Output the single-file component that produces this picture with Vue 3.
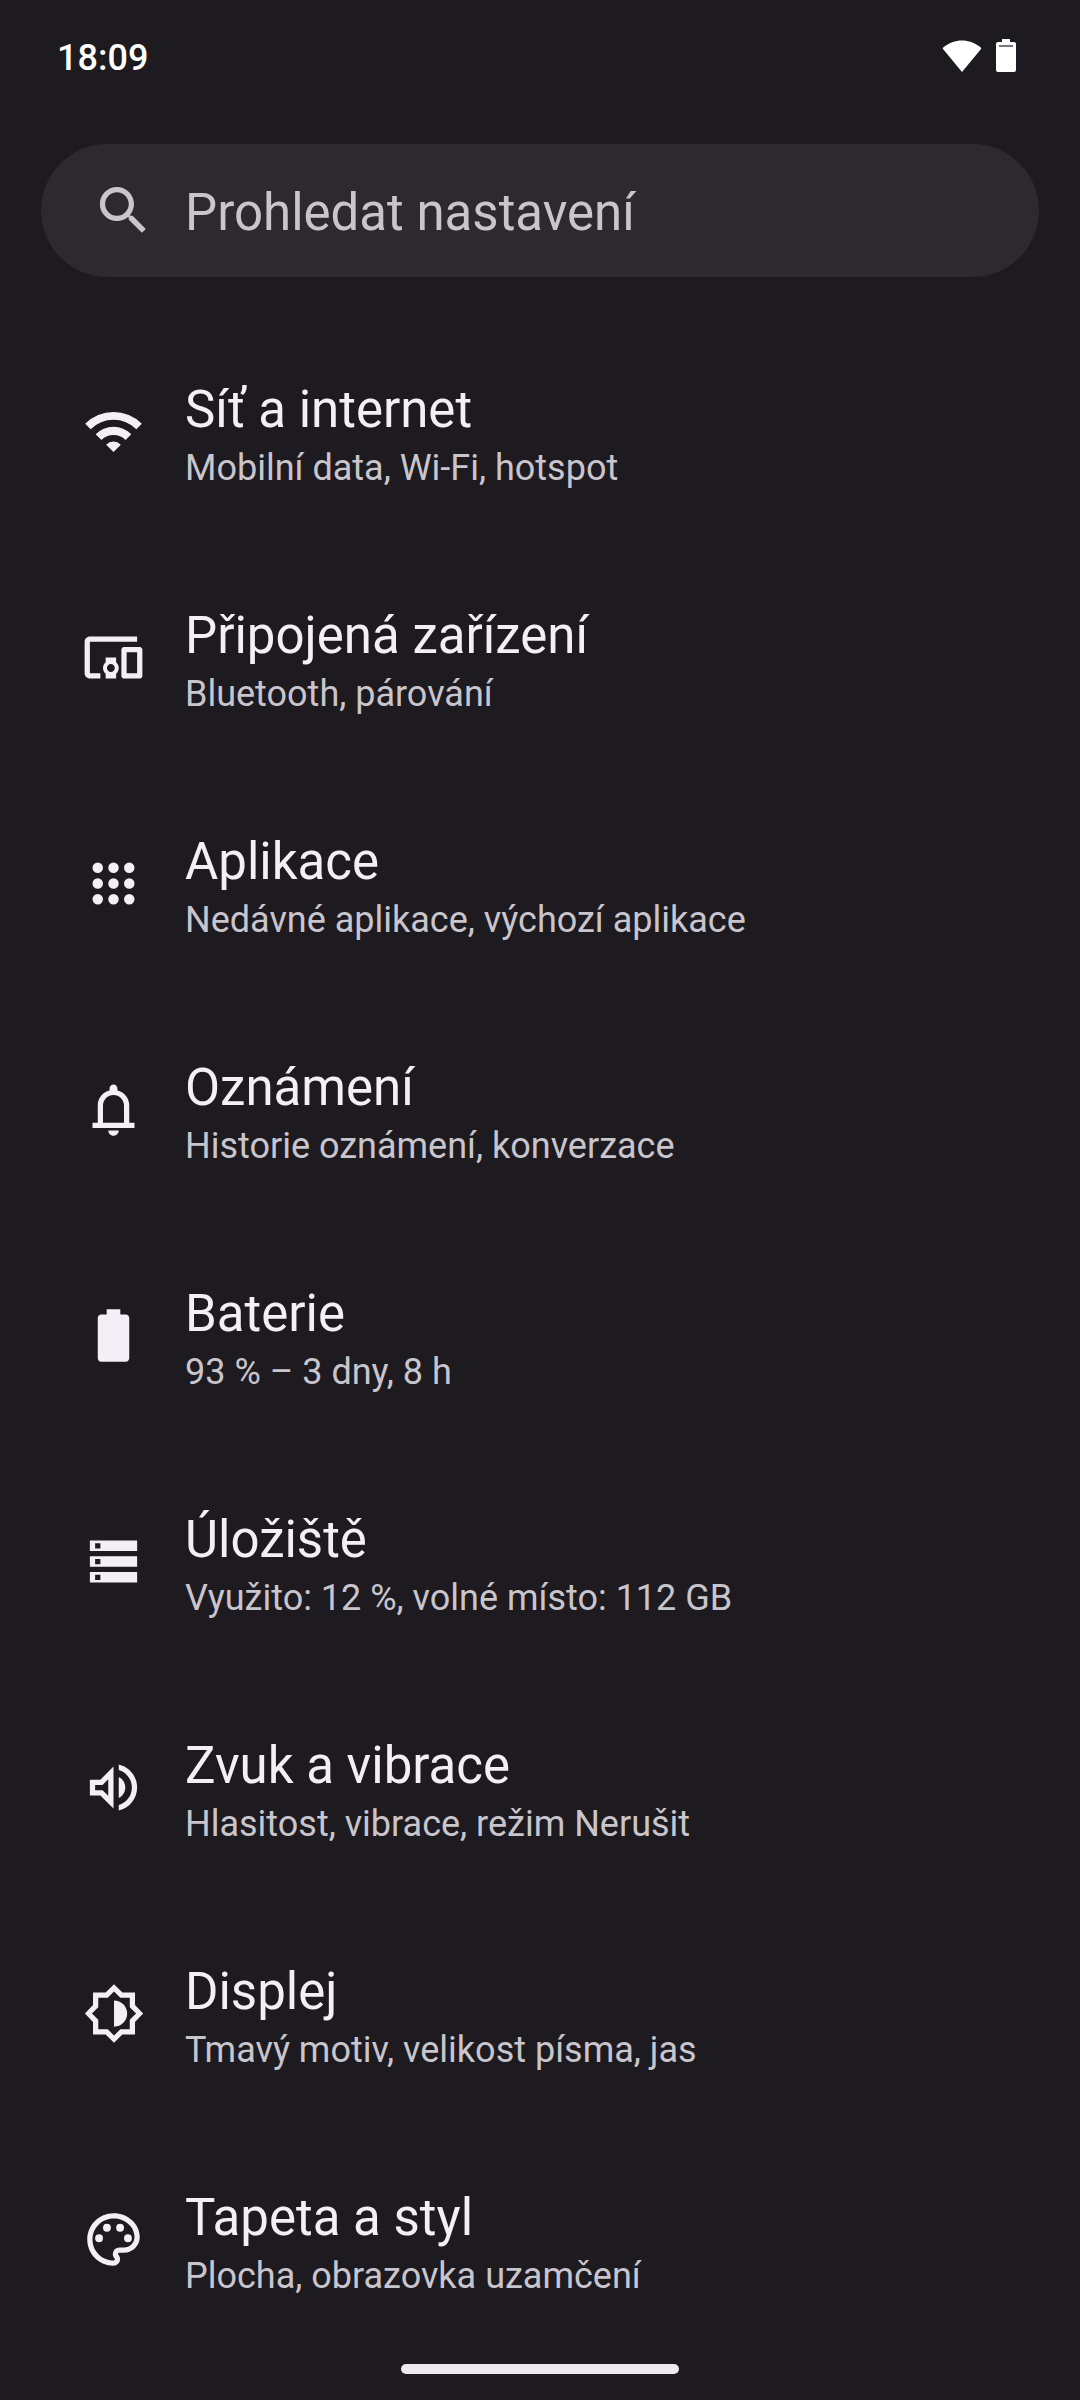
<template>
  <div class="settings">
    <header class="status-bar">
      <time class="clock">18:09</time>
      <div class="status-icons">
        <svg class="status-wifi" viewBox="0 0 40 34" aria-hidden="true">
          <path d="M20 33 L1 10 Q0.400 9 1.500 8.300 C12 -0.900 28 -0.900 38.500 8.300 Q39.600 9 39 10 Z" />
        </svg>
        <svg class="status-battery" viewBox="0 0 20 34" aria-hidden="true">
          <path d="M6 0h8v3h4q2 0 2 2v26q0 2-2 2H2q-2 0-2-2V5q0-2 2-2h4z" />
          <path class="battery-level" d="M3 6h14v2H3z" />
        </svg>
      </div>
    </header>

    <label class="search">
      <svg class="icon" viewBox="0 0 24 24" aria-hidden="true">
        <path :d="searchIcon" />
      </svg>
      <input v-model="query" type="text" placeholder="Prohledat nastavení" aria-label="Prohledat nastavení">
    </label>

    <nav>
      <ul class="menu">
        <li v-for="item in items" :key="item.id">
          <a :href="'#' + item.id" class="row">
            <svg class="icon" viewBox="0 0 24 24" aria-hidden="true">
              <path :d="item.icon" fill-rule="evenodd" />
            </svg>
            <span class="texts">
              <span class="title">{{ item.title }}</span>
              <span class="summary">{{ item.summary }}</span>
            </span>
          </a>
        </li>
      </ul>
    </nav>

    <footer class="nav-bar">
      <span class="handle"></span>
    </footer>
  </div>
</template>

<script setup>
import { ref } from 'vue';

const query = ref('');

const searchIcon = 'M15.5 14h-.79l-.28-.27C15.41 12.59 16 11.11 16 9.5 16 5.91 13.09 3 9.5 3S3 5.91 3 9.5 5.91 16 9.5 16c1.61 0 3.09-.59 4.23-1.57l.27.28v.79l5 4.99L20.49 19l-4.99-5zm-6 0C7.01 14 5 11.99 5 9.5S7.01 5 9.5 5 14 7.01 14 9.5 11.99 14 9.5 14z';

// 3x3 mřížka teček
const dots = [6, 12, 18]
  .flatMap((y) => [6, 12, 18].map((x) => `M${x - 2} ${y}a2 2 0 1 0 4 0a2 2 0 1 0-4 0z`))
  .join('');

const items = [
  {
    id: 'network',
    title: 'Síť a internet',
    summary: 'Mobilní data, Wi-Fi, hotspot',
    icon: 'M1.2 9A15.3 15.3 0 0 1 22.8 9L20.7 11.1A12.3 12.3 0 0 0 3.3 11.1zM5.2 13A9.6 9.6 0 0 1 18.8 13L16.6 15.2A6.5 6.5 0 0 0 7.4 15.2zM9.2 17A4 4 0 0 1 14.8 17L12 19.8z',
  },
  {
    id: 'devices',
    title: 'Připojená zařízení',
    summary: 'Bluetooth, párování',
    icon: 'M3 6h18V4H3c-1.1 0-2 .9-2 2v12c0 1.1.9 2 2 2h4v-2H3V6zm10 6H9v1.78c-.61.55-1 1.33-1 2.22s.39 1.67 1 2.22V20h4v-1.78c.61-.55 1-1.34 1-2.22s-.39-1.67-1-2.22V12zm-2 5.5c-.83 0-1.5-.67-1.5-1.5s.67-1.5 1.5-1.5 1.5.67 1.5 1.5-.67 1.5-1.5 1.5zM22 8h-6c-.5 0-1 .5-1 1v10c0 .5.5 1 1 1h6c.5 0 1-.5 1-1V9c0-.5-.5-1-1-1zm-1 10h-4v-8h4v8z',
  },
  {
    id: 'apps',
    title: 'Aplikace',
    summary: 'Nedávné aplikace, výchozí aplikace',
    icon: dots,
  },
  {
    id: 'notifications',
    title: 'Oznámení',
    summary: 'Historie oznámení, konverzace',
    icon: 'M18 17v-6.500c0-2.800-1.800-5-4.500-5.700V4c0-.83-.67-1.5-1.5-1.5s-1.5.67-1.5 1.5v.8C7.800 5.500 6 7.700 6 10.500V17H4v2h16v-2zM16 17H8v-6.500c0-2.200 1.800-4 4-4s4 1.800 4 4zM10 20h4c0 1.100-.9 2-2 2s-2-.9-2-2z',
  },
  {
    id: 'battery',
    title: 'Baterie',
    summary: '93 % – 3 dny, 8 h',
    icon: 'M16.670 4H14.600V2H9.400v2H7.330C6.600 4 6 4.600 6 5.330v15.330C6 21.400 6.600 22 7.330 22h9.330C17.400 22 18 21.400 18 20.670V5.330C18 4.600 17.400 4 16.670 4z',
  },
  {
    id: 'storage',
    title: 'Úložiště',
    summary: 'Využito: 12 %, volné místo: 112 GB',
    icon: 'M3 4h18v4H3zM3 10h18v4H3zM3 16h18v4H3zM5 5h2v2H5zM5 11h2v2H5zM5 17h2v2H5z',
  },
  {
    id: 'sound',
    title: 'Zvuk a vibrace',
    summary: 'Hlasitost, vibrace, režim Nerušit',
    icon: 'M3 9v6h4l5 5V4L7 9H3zm7-.17v6.34L7.83 13H5v-2h2.83L10 8.83zM16.5 12c0-1.77-1.02-3.29-2.5-4.03v8.05c1.48-.73 2.5-2.25 2.5-4.02zM14 3.23v2.06c2.89.86 5 3.54 5 6.71s-2.11 5.85-5 6.71v2.06c4.01-.91 7-4.49 7-8.770s-2.990-7.860-7-8.770z',
  },
  {
    id: 'display',
    title: 'Displej',
    summary: 'Tmavý motiv, velikost písma, jas',
    icon: 'M20.200 15.200L23.300 12 20.200 8.800V4h-4.800L12.200.9 9 4H4.200v4.800L1.100 12l3.100 3.200V20H9l3.200 3.100 3.200-3.100h4.800zM18.200 14.400V18h-3.600l-2.400 2.400L9.800 18H6.200v-3.600L3.800 12l2.400-2.400V6h3.600l2.400-2.400L14.600 6h3.600v3.600l2.400 2.400zM12.200 7v10a5 5 0 0 0 0-10z',
  },
  {
    id: 'wallpaper',
    title: 'Tapeta a styl',
    summary: 'Plocha, obrazovka uzamčení',
    icon: 'M12 22C6.49 22 2 17.51 2 12S6.49 2 12 2s10 4.04 10 9c0 3.31-2.69 6-6 6h-1.77c-.28 0-.5.22-.5.5 0 .12.05.23.13.33.41.47.64 1.06.64 1.67A2.5 2.5 0 0 1 12 22zm0-18c-4.41 0-8 3.59-8 8s3.59 8 8 8c.28 0 .5-.22.5-.5a.54.54 0 0 0-.14-.35c-.41-.46-.63-1.05-.63-1.65a2.5 2.5 0 0 1 2.5-2.5H16c2.21 0 4-1.79 4-4 0-3.86-3.59-7-8-7zM5 11.5a1.5 1.5 0 1 0 3 0a1.5 1.5 0 1 0-3 0zM8 7.5a1.5 1.5 0 1 0 3 0a1.5 1.5 0 1 0-3 0zM13 7.5a1.5 1.5 0 1 0 3 0a1.5 1.5 0 1 0-3 0zM16 11.5a1.5 1.5 0 1 0 3 0a1.5 1.5 0 1 0-3 0z',
  },
];
</script>

<style>
body { margin: 0; background: #1d1a20; }
</style>

<style scoped>
.settings {
  display: flex;
  flex-direction: column;
  box-sizing: border-box;
  min-height: 100vh;
  background: #1d1a20;
  color: #f3eff7;
  font-family: Roboto, "Noto Sans", sans-serif;
}

.status-bar {
  display: flex;
  align-items: flex-end;
  justify-content: space-between;
  padding: 37px 64px 65px 57px;
  color: #fff;
}
.clock { font-size: 36px; line-height: 42px; font-weight: 500; }
.status-icons { display: flex; gap: 14px; padding-bottom: 6px; }
.status-icons svg { display: block; height: 34px; fill: #fff; }
.status-wifi { width: 40px; }
.status-battery { width: 20px; }
.status-battery .battery-level { fill: #77747a; }

.icon { flex: none; width: 63px; height: 63px; fill: currentColor; }

.search {
  display: flex;
  align-items: center;
  gap: 30px;
  height: 133px;
  margin: 0 41px;
  padding: 0 51px;
  box-sizing: border-box;
  border-radius: 67px;
  background: #2d292f;
  color: #cac5cd;
}
.search input {
  flex: 1;
  min-width: 0;
  padding: 4px 0 0;
  border: 0;
  outline: 0;
  background: transparent;
  color: inherit;
  font-family: inherit;
  font-size: 51px;
  line-height: 70px;
}
.search input::placeholder { color: inherit; opacity: 1; }

.menu { list-style: none; margin: 41px 0 0; padding: 0; }
.row {
  display: flex;
  align-items: center;
  gap: 40px;
  min-height: 226px;
  padding: 0 82px;
  color: inherit;
  text-decoration: none;
}
.texts { display: flex; flex-direction: column; padding-top: 4px; }
.title { font-size: 51px; line-height: 70px; }
.summary { font-size: 36px; line-height: 46px; color: #c9c5cc; }

.nav-bar {
  display: flex;
  justify-content: center;
  margin-top: auto;
  padding: 12px 0 26px;
}
.handle { width: 278px; height: 10px; border-radius: 5px; background: #eceaef; }
</style>
